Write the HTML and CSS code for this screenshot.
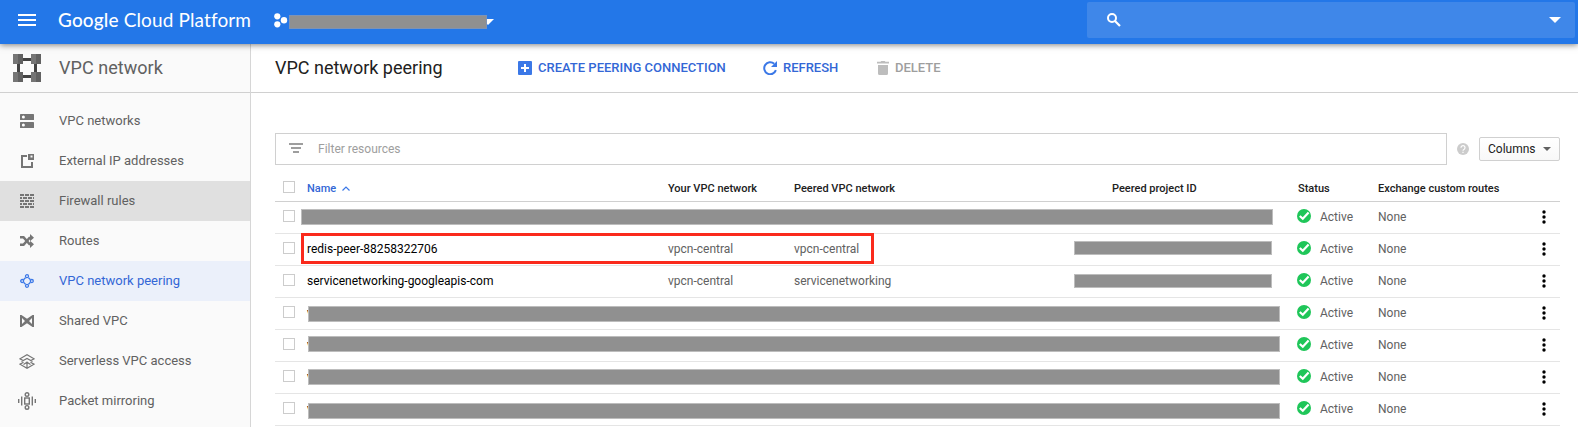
FILE: index.html
```html
<!DOCTYPE html>
<html lang="en">
<head>
<meta charset="utf-8">
<title>VPC network peering</title>
<link rel="stylesheet" href="styles.css">
</head>
<body>
<svg class="defs" width="0" height="0">
  <symbol id="ok" viewBox="0 0 14 14"><circle cx="7" cy="7" r="7" fill="#1fc659"/><path d="M2.800 7l3 2.800 5.800-6.300" fill="none" stroke="#fff" stroke-width="2.200"/></symbol>
  <symbol id="more" viewBox="0 0 4 14"><circle cx="2" cy="2" r="1.7"/><circle cx="2" cy="7" r="1.7"/><circle cx="2" cy="12" r="1.7"/></symbol>
</svg>
<header class="topbar">
  <svg class="menu" width="18" height="12" viewBox="0 0 18 12" fill="#fff"><path d="M0 0h18v2H0zM0 5h18v2H0zM0 10h18v2H0z"/></svg>
  <div class="brand"><span class="brand-strong">Google</span> <span class="brand-rest">Cloud Platform</span></div>
  <div class="project">
    <svg width="14" height="15" viewBox="0 0 14 15" fill="#fff"><circle cx="3.3" cy="3.3" r="3.1"/><circle cx="10" cy="7.3" r="3.2"/><circle cx="3.3" cy="11.3" r="3.1"/></svg>
    <span class="redact project-name"></span>
    <svg class="project-caret" width="12" height="6" viewBox="0 0 12 6" fill="#fff"><path d="M0 0h12L6 6z"/></svg>
  </div>
  <div class="search">
    <svg width="14" height="14" viewBox="0 0 14 14" fill="none" stroke="#fff"><circle cx="5" cy="5" r="4" stroke-width="2"/><path d="M8 8l5 5" stroke-width="2.2"/></svg>
    <svg width="12" height="6" viewBox="0 0 12 6" fill="#fff"><path d="M0 0h12L6 6z"/></svg>
  </div>
</header>
<div class="shell">
  <nav class="sidebar">
    <div class="side-title">
      <svg width="28" height="28" viewBox="0 0 28 28"><path d="M9 4h10v3H9zM9 21h10v3H9zM4 9h3v10H4zM21 9h3v10h-3z" fill="#424242"/><path d="M0 0h10v10H0zM18 0h10v10H18zM0 18h10v10H0zM18 18h10v10H18z" fill="#757575"/><path d="M5 0h5v10H5zM23 0h5v10h-5zM5 18h5v10H5zM23 18h5v10h-5z" fill="#616161"/></svg>
      <span>VPC network</span>
    </div>
    <ul class="nav">
      <li><span class="ico"><svg width="14" height="14" viewBox="0 0 14 14"><rect width="14" height="6" rx=".6"/><rect y="8" width="14" height="6" rx=".6"/><circle cx="3.4" cy="3" r="1.5" fill="#fff"/><circle cx="3.4" cy="11" r="1.5" fill="#fff"/></svg></span>VPC networks</li>
      <li><span class="ico"><svg width="14" height="14" viewBox="0 0 14 14"><path d="M1 1h6v2H3v9h8V8h2v6H1zM8 0h6v6H8zM10.5 1.5v2h2v-2z" fill-rule="evenodd"/></svg></span>External IP addresses</li>
      <li class="hover"><span class="ico"><svg width="14" height="14" viewBox="0 0 14 14"><path d="M0 0h4v2H0zM5 0h4v2H5zM10 0h4v2h-4zM0 3h2v2H0zM3 3h4v2H3zM8 3h4v2H8zM13 3h1v2h-1zM0 6h4v2H0zM5 6h4v2H5zM10 6h4v2h-4zM0 9h2v2H0zM3 9h4v2H3zM8 9h4v2H8zM13 9h1v2h-1zM0 12h4v2H0zM5 12h4v2H5zM10 12h4v2h-4z"/></svg></span>Firewall rules</li>
      <li><span class="ico"><svg width="14" height="14" viewBox="0 0 14 14"><path d="M0 3.2h3.5L9.5 10H11" fill="none" stroke="#757575" stroke-width="2.6"/><path d="M0 10.8h3.5L9.5 4H11" fill="none" stroke="#757575" stroke-width="2.6"/><path d="M10 0l4 3.7-4 3.6zM10 6.7l4 3.6-4 3.7z"/></svg></span>Routes</li>
      <li class="active"><span class="ico"><svg width="14" height="14" viewBox="0 0 14 14" fill="none" stroke="#3b78e7" stroke-width="1.3"><path d="M3.5 5.8l2-2M8.5 3.8l2 2M3.5 8.2l2 2M8.5 10.2l2-2"/><circle cx="7" cy="2.2" r="1.5"/><circle cx="7" cy="11.8" r="1.5"/><circle cx="2.2" cy="7" r="1.5"/><circle cx="11.8" cy="7" r="1.5"/></svg></span>VPC network peering</li>
      <li><span class="ico"><svg width="14" height="12" viewBox="0 0 14 12"><path d="M0 0h1.500L7 3.800 12.500 0H14v12h-1.500L7 8.200 1.500 12H0zM2 3v6l3-3zM12 3v6L9 6z" fill-rule="evenodd"/></svg></span>Shared VPC</li>
      <li><span class="ico"><svg width="16" height="15" viewBox="0 0 16 15" fill="none" stroke="#757575" stroke-width="1.200"><path d="M4.500 6.800L1 4.800 8 .8l7 4-3.500 2M4.500 8.200L1 10.200l7 4 7-4-3.500-2M2.500 7.500L8 4.500l5.500 3M4.500 10.500L8 8.300l3.500 2.200M8 7.500v6.500"/></svg></span>Serverless VPC access</li>
      <li><span class="ico"><svg width="18" height="18" viewBox="0 0 18 18" fill="none" stroke="#757575" stroke-width="1.400"><path d="M.7 7v4M3.700 4.500v9M14.300 4.500v9M17.300 7v4"/><rect x="6.700" y="6" width="4.600" height="6"/><circle cx="9" cy="2.600" r="1.800"/><circle cx="9" cy="15.400" r="1.800"/></svg></span>Packet mirroring</li>
    </ul>
  </nav>
  <main class="main">
    <div class="toolbar">
      <h1>VPC network peering</h1>
      <button class="act create"><svg width="14" height="14" viewBox="0 0 14 14"><rect width="14" height="14" rx="1" fill="#3b78e7"/><path d="M7 3v8M3 7h8" stroke="#fff" stroke-width="2"/></svg>CREATE PEERING CONNECTION</button>
      <button class="act refresh"><svg width="14" height="14" viewBox="0 0 14 14"><path d="M12.900 9.200A6 6 0 1 1 11.200 2.700" fill="none" stroke="#3b78e7" stroke-width="2"/><path d="M14 0v6H8z" fill="#3b78e7"/></svg>REFRESH</button>
      <button class="act delete"><svg width="12" height="14" viewBox="0 0 12 14" fill="#bdbdbd"><path d="M0 .8h3.500L4.300 0h3.400l.8.800H12v1.600H0zM1 4h10v8.500q0 1.500-1.500 1.500h-7Q1 14 1 12.500z"/></svg>DELETE</button>
    </div>
    <div class="content">
      <div class="filters">
        <div class="filter-box"><svg width="14" height="10" viewBox="0 0 14 10" fill="#9e9e9e"><path d="M0 0h14v2H0zM2 4h10v2H2zM4 8h6v2H4z"/></svg><span>Filter resources</span></div>
        <svg class="help" width="12" height="12" viewBox="0 0 12 12"><circle cx="6" cy="6" r="6" fill="#ccc"/><path d="M4 4.700a2 2 0 1 1 3.200 1.500Q6 6.800 6 7.800" fill="none" stroke="#fff" stroke-width="1.200"/><path d="M5.400 8.700h1.200v1.200H5.400z" fill="#fff"/></svg>
        <button class="columns">Columns<svg width="8" height="4" viewBox="0 0 8 4" fill="#616161"><path d="M0 0h8L4 4z"/></svg></button>
      </div>
      <div class="table">
        <div class="row head">
          <i class="check"></i><span class="sorted">Name<svg width="8" height="5" viewBox="0 0 8 5" fill="none" stroke="#3b78e7" stroke-width="1.200"><path d="M.5 4.500L4 1l3.500 3.500"/></svg></span><span>Your VPC network</span><span>Peered VPC network</span><span class="pid">Peered project ID</span><span>Status</span><span>Exchange custom routes</span>
        </div>
        <div class="row"><i class="check"></i><span class="name"></span><span></span><span></span><span></span><span class="status"><svg width="14" height="14"><use href="#ok"/></svg>Active</span><span>None</span><svg class="more" width="4" height="14"><use href="#more"/></svg><b class="redact bar first"></b></div>
        <div class="row"><i class="check"></i><span class="name">redis-peer-88258322706</span><span>vpcn-central</span><span>vpcn-central</span><span></span><span class="status"><svg width="14" height="14"><use href="#ok"/></svg>Active</span><span>None</span><svg class="more" width="4" height="14"><use href="#more"/></svg><b class="redact id id-a"></b><b class="highlight"></b></div>
        <div class="row"><i class="check"></i><span class="name">servicenetworking-googleapis-com</span><span>vpcn-central</span><span>servicenetworking</span><span></span><span class="status"><svg width="14" height="14"><use href="#ok"/></svg>Active</span><span>None</span><svg class="more" width="4" height="14"><use href="#more"/></svg><b class="redact id id-b"></b></div>
        <div class="row"><i class="check"></i><span class="name">v</span><span></span><span></span><span></span><span class="status"><svg width="14" height="14"><use href="#ok"/></svg>Active</span><span>None</span><svg class="more" width="4" height="14"><use href="#more"/></svg><b class="redact bar bar-a"></b></div>
        <div class="row"><i class="check"></i><span class="name">v</span><span></span><span></span><span></span><span class="status"><svg width="14" height="14"><use href="#ok"/></svg>Active</span><span>None</span><svg class="more" width="4" height="14"><use href="#more"/></svg><b class="redact bar bar-b"></b></div>
        <div class="row"><i class="check"></i><span class="name">v</span><span></span><span></span><span></span><span class="status"><svg width="14" height="14"><use href="#ok"/></svg>Active</span><span>None</span><svg class="more" width="4" height="14"><use href="#more"/></svg><b class="redact bar bar-c"></b></div>
        <div class="row"><i class="check"></i><span class="name">v</span><span></span><span></span><span></span><span class="status"><svg width="14" height="14"><use href="#ok"/></svg>Active</span><span>None</span><svg class="more" width="4" height="14"><use href="#more"/></svg><b class="redact bar bar-d"></b></div>
      </div>
    </div>
  </main>
</div>
</body>
</html>
```
FILE: styles.css
```css
* { box-sizing: border-box; }
html, body { margin: 0; height: 427px; overflow: hidden; }
body { font-family: Roboto, sans-serif; font-size: 12px; color: #616161; background: #fff; display: flex; flex-direction: column; }
svg { display: block; flex: none; }
.defs { position: absolute; }
button { font: inherit; margin: 0; padding: 0; border: 0; background: none; }

.topbar { height: 44px; flex: none; background: #2377e8; display: flex; align-items: center; position: relative; z-index: 1; box-shadow: 0 1px 6px rgba(0, 0, 0, .5); padding: 0 3px 0 18px; }
.menu { margin-top: -4px; }
.brand { margin-left: 22px; width: 216px; color: #fff; font: 19px/24px Lato, sans-serif; letter-spacing: .13px; white-space: nowrap; margin-top: -4px; }
.brand-strong { font-weight: 500; }
.project { display: flex; align-items: center; margin-top: -4px; }
.redact { background: #909090; border: 1px solid #bdbdbd; display: block; }
.project-name { width: 198px; height: 14px; border-color: #7e93b5; margin: 4px 0 0 1px; position: relative; z-index: 1; }
.project-caret { margin: 3px 0 0 -5px; }
.search { margin: -4px 0 0 auto; width: 488px; height: 36px; border-radius: 2px; background: #3f87e9; display: flex; align-items: center; justify-content: space-between; padding: 0 14px 0 20px; }

.shell { display: flex; flex: 1; min-height: 0; }
.sidebar { width: 251px; flex: none; background: #fafafa; border-right: 1px solid #d6d6d6; }
.side-title { height: 49px; border-bottom: 1px solid #d0d0d0; display: flex; align-items: center; gap: 18px; padding: 0 0 2px 13px; font-size: 18px; letter-spacing: .05px; }
.side-title svg { margin-top: 2px; }
.nav { list-style: none; margin: 0; padding: 8px 0 0; font-size: 13px; }
.nav li { height: 40px; display: flex; align-items: center; padding-bottom: 2px; }
.ico { width: 59px; padding-right: 5px; display: flex; justify-content: center; fill: #757575; margin-top: 2px; }
.nav .hover { background: #e0e0e0; }
.nav .active { background: #ebf0fa; color: #3367d6; }

.main { flex: 1; min-width: 0; }
.toolbar { height: 49px; border-bottom: 1px solid #d0d0d0; display: flex; align-items: center; padding: 0 0 2px 24px; }
h1 { margin: 0; font-size: 18px; font-weight: 400; color: #212121; width: 243px; }
.act { display: flex; align-items: center; gap: 6px; font-weight: 500; font-size: 13px; color: #3367d6; white-space: nowrap; }
.act svg { margin-top: 1px; }
.create { width: 245px; }
.refresh { width: 114px; }
.delete { color: #9e9e9e; }

.content { padding: 40px 18px 0 24px; }
.filters { display: flex; align-items: center; height: 32px; }
.filter-box { width: 1172px; height: 32px; border: 1px solid #d0d0d0; display: flex; align-items: center; padding-left: 13px; gap: 15px; color: #9e9e9e; }
.filter-box svg { margin-top: -2px; }
.help { margin: -1px 10px 0; }
.columns { width: 81px; height: 24px; border: 1px solid #d0d0d0; border-radius: 2px; display: flex; align-items: center; justify-content: space-between; padding: 0 8px; color: #212121; background: linear-gradient(#fff, #f8f8f8); }

.row { display: grid; grid-template-columns: 32px 361px 126px 318px 186px 80px 163.5px 4px; align-items: center; height: 32px; padding-bottom: 2px; border-bottom: 1px solid #e5e5e5; position: relative; white-space: nowrap; }
.head { height: 37px; padding: 10px 0 0; font-size: 11px; font-weight: 500; color: #212121; border-color: #d0d0d0; }
.check { width: 12px; height: 12px; border: 1px solid #ccc; background: #fff; margin: -1px 0 0 8px; }
.head .check { margin-top: -3px; }
.sorted { color: #3367d6; display: flex; align-items: center; gap: 6px; }
.name { color: #000; }
.status { display: flex; align-items: center; gap: 9px; margin-left: -1px; }
.status svg { margin-top: -1px; }
.more { fill: #000; margin-top: 1px; }

/* Masks and the annotation frame sit over the row contents. */
.bar { position: absolute; left: 33px; width: 972px; height: 16px; }
.first { left: 26px; top: 7px; }
.bar-a { top: 8px; }
.bar-b { top: 6px; }
.bar-c { top: 7px; }
.bar-d { top: 9px; }
.id { position: absolute; left: 799px; width: 198px; height: 14px; top: 7px; }
.id-b { top: 8px; }
.highlight { position: absolute; left: 26px; top: -1px; width: 573px; height: 31px; border: 3px solid #fa2a1c; }
```
